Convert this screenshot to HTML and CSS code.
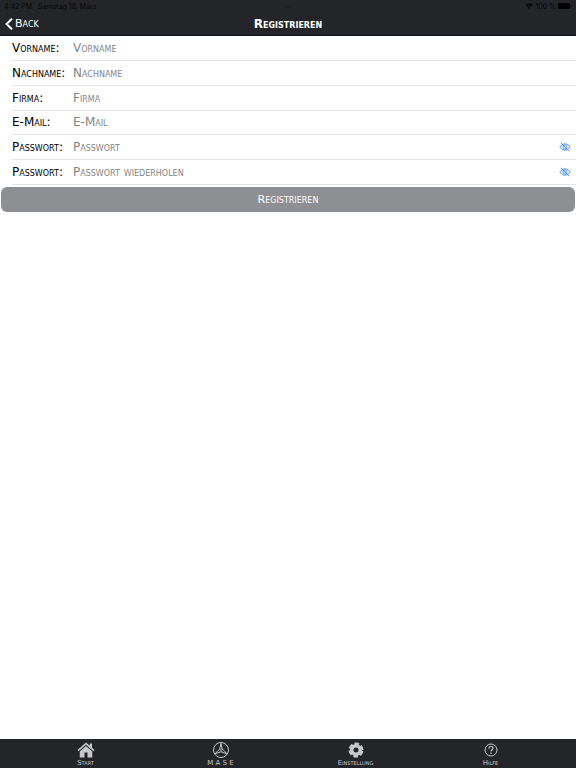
FILE: index.html
```html
<!DOCTYPE html>
<html lang="de">
<head>
    <meta charset="UTF-8">
    <meta name="viewport" content="width=device-width, initial-scale=1.0">
    <title>Registrieren</title>
    <link rel="stylesheet" href="styles.css">
</head>
<body>
    <header class="top">
        <div class="status">
            <span class="status-left"><span>4:42 PM</span><span>Samstag 18. März</span></span>
            <span class="dots">•••</span>
            <span class="status-right">
                <svg width="8" height="6" viewBox="0 0 16 12" fill="none" stroke="currentColor" stroke-width="2.4"><path d="M1 4.500a10 10 0 0 1 14 0M3.500 7.500a6.500 6.500 0 0 1 9 0"/><path d="M5.500 9a4 4 0 0 1 5 0L8 12z" fill="currentColor" stroke="none"/></svg>
                <span>100 %</span>
                <svg width="14" height="6" viewBox="0 0 14 6"><rect width="12" height="6" rx="1.500"/><path d="M12.700 2v2q1-.3 1-1t-1-1z"/></svg>
            </span>
        </div>
        <nav class="navbar">
            <a class="back" href="#">
                <svg width="8" height="12" viewBox="0 0 8 12" fill="none" stroke="currentColor" stroke-width="2"><path d="M7 .7 1.500 6 7 11.300"/></svg>
                <span>Back</span>
            </a>
            <h1>Registrieren</h1>
        </nav>
    </header>

    <main>
        <form>
            <div class="fields">
                <div class="row">
                    <label for="vorname">Vorname:</label>
                    <input id="vorname" type="text" placeholder="Vorname">
                </div>
                <div class="row">
                    <label for="nachname">Nachname:</label>
                    <input id="nachname" type="text" placeholder="Nachname">
                </div>
                <div class="row">
                    <label for="firma">Firma:</label>
                    <input id="firma" type="text" placeholder="Firma">
                </div>
                <div class="row">
                    <label for="email">E-Mail:</label>
                    <input id="email" type="email" placeholder="E-Mail">
                </div>
                <div class="row">
                    <label for="passwort">Passwort:</label>
                    <input id="passwort" type="password" placeholder="Passwort">
                    <button class="eye" type="button" aria-label="Passwort anzeigen">
                        <svg width="12" height="10" viewBox="0 0 24 20" fill="none" stroke="currentColor" stroke-width="1.800"><path d="M1.500 10Q6 3.500 12 3.500T22.500 10Q18 16.500 12 16.500T1.500 10z"/><circle cx="12" cy="10" r="4"/><path d="M3.500 1.500l17 17"/></svg>
                    </button>
                </div>
                <div class="row">
                    <label for="passwort2">Passwort:</label>
                    <input id="passwort2" type="password" placeholder="Passwort wiederholen">
                    <button class="eye" type="button" aria-label="Passwort anzeigen">
                        <svg width="12" height="10" viewBox="0 0 24 20" fill="none" stroke="currentColor" stroke-width="1.800"><path d="M1.500 10Q6 3.500 12 3.500T22.500 10Q18 16.500 12 16.500T1.500 10z"/><circle cx="12" cy="10" r="4"/><path d="M3.500 1.500l17 17"/></svg>
                    </button>
                </div>
            </div>
            <button class="submit" type="submit">Registrieren</button>
        </form>
    </main>

    <nav class="tabbar">
        <a href="#">
            <svg width="18" height="16" viewBox="0 0 36 32" fill="currentColor"><path d="M18 1 1 16l2 2.500L18 5.500 33 18.500l2-2.500-5-4.500V3h-4.500v4.500z"/><path d="M18 8 5.500 19v12H15V21h6v10h9.500V19z"/></svg>
            <span>Start</span>
        </a>
        <a href="#">
            <svg width="18" height="16" viewBox="0 0 36 32" fill="none" stroke="currentColor" stroke-width="2"><circle cx="18" cy="16" r="15"/><path d="M18 3 15.500 14 6 23.500l12-4 12 4L20.500 14z"/><path d="M15.500 14 18 19.500 20.500 14z" stroke-width="1"/></svg>
            <span>M A S E</span>
        </a>
        <a href="#">
            <svg width="18" height="16" viewBox="0 0 36 32" fill="none" stroke="currentColor"><circle cx="18" cy="16" r="8.500" stroke-width="7"/><circle cx="18" cy="16" r="12.500" stroke-width="5" stroke-dasharray="9 4.090" stroke-dashoffset="-2.050"/></svg>
            <span>Einstellung</span>
        </a>
        <a href="#">
            <svg width="18" height="16" viewBox="0 0 36 32" fill="none" stroke="currentColor" stroke-width="2"><circle cx="18" cy="16" r="12"/><path d="M14 13q0-4 4-4t4 3.500c0 3-4 3-4 6.500" stroke-width="2.400"/><circle cx="18" cy="22.500" r="1.600" fill="currentColor" stroke="none"/></svg>
            <span>Hilfe</span>
        </a>
    </nav>
</body>
</html>
```
FILE: styles.css
```css
* {
    box-sizing: border-box;
}

body {
    margin: 0;
    min-height: 100vh;
    display: flex;
    flex-direction: column;
    background-color: #fff;
    font-family: "DejaVu Sans", sans-serif;
    font-size: 12px;
    font-variant: small-caps;
}

/* status line and title */
.top {
    background-color: #242529;
    color: #fff;
    border-bottom: 1px solid #111214;
}

.status {
    display: grid;
    grid-template-columns: 1fr auto 1fr;
    align-items: center;
    height: 12px;
    padding: 0 4px;
    color: #08080a;
    font-family: Inter, sans-serif;
    font-size: 7px;
    font-variant: normal;
}

.status-left {
    display: flex;
    gap: 6px;
}

.dots {
    color: #17181b;
    font-size: 4px;
}

.status-right {
    display: flex;
    justify-content: flex-end;
    align-items: center;
    gap: 2px;
}

.navbar {
    display: grid;
    grid-template-columns: 1fr auto 1fr;
    align-items: center;
    height: 23px;
    padding: 0 5px;
}

.back {
    display: flex;
    align-items: center;
    gap: 2px;
    color: #fff;
    font-size: 11px;
    text-decoration: none;
}

h1 {
    margin: 0;
    font-size: 12px;
    font-weight: bold;
}

/* form */
main {
    flex: 1;
}

.fields {
    display: grid;
    grid-auto-rows: 1fr;
    min-height: 149px;
    padding-left: 12px;
}

.row {
    display: flex;
    align-items: center;
    padding-right: 5px;
    border-bottom: 1px solid #e6e6e8;
}

label {
    width: 61px;
    color: #000;
    white-space: nowrap;
}

input {
    flex: 1;
    min-width: 0;
    padding: 0;
    border: none;
    outline: none;
    background: none;
    font: inherit;
}

input::placeholder {
    color: #858587;
    opacity: 1;
}

button {
    border: none;
    font: inherit;
    cursor: pointer;
}

.eye {
    display: flex;
    padding: 0;
    background: none;
    color: #3f86f2;
}

.submit {
    display: block;
    width: calc(100% - 2px);
    height: 25px;
    margin: 2px 1px;
    border-radius: 6px;
    background-color: #8e8f92;
    color: #fff;
    font-size: 11px;
}

/* bottom tabs */
.tabbar {
    display: flex;
    height: 29px;
    padding: 0 18px;
    background-color: #242529;
}

.tabbar a {
    flex: 1;
    display: flex;
    flex-direction: column;
    align-items: center;
    gap: 1px;
    padding-top: 3px;
    color: #c8c8ca;
    font-size: 7px;
    line-height: 8px;
    text-decoration: none;
}
```
